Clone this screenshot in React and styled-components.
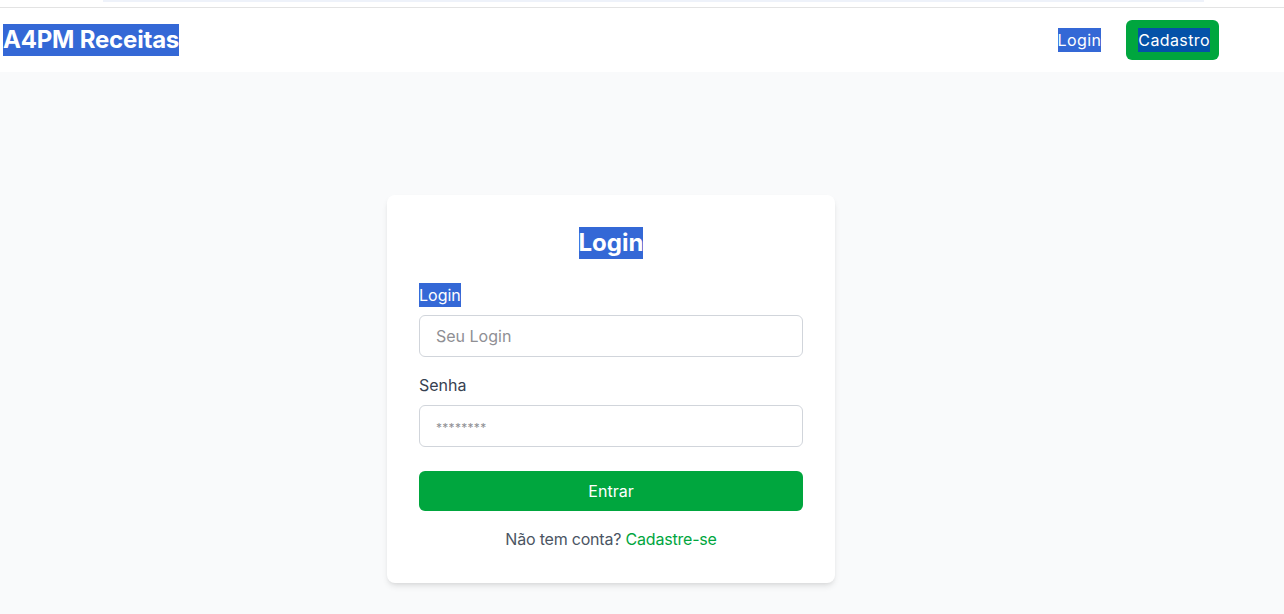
import React from 'react'
import styled, { createGlobalStyle } from 'styled-components'

const GlobalStyle = createGlobalStyle`
  * { box-sizing: border-box; }
  html, body { margin: 0; padding: 0; }
  body {
    font-family: Inter, "Noto Sans", Arial, sans-serif;
    background: #f9fafb;
    color: #1f2937;
  }
`

const Page = styled.div`
  min-height: 614px;
  display: flex;
  flex-direction: column;
  background: #f9fafb;
`

const TopStrip = styled.div`
  height: 8px;
  background: #fff;
  border-bottom: 1px solid #e3e3e3;
  padding-left: 103px;
`

const StripBar = styled.div`
  width: 1101px;
  height: 2px;
  background: #eef2fa;
`

const Header = styled.header`
  height: 64px;
  background: #fff;
  display: flex;
  align-items: center;
  justify-content: space-between;
  padding: 0 65px 0 3px;
`

const Selected = styled.span`
  display: inline-block;
  background: ${(p) => (p.$onGreen ? '#0452a8' : '#3468d6')};
  color: #fff;
  line-height: ${(p) => p.$lh || '24px'};
`

const Brand = styled.h1`
  margin: 0;
  font-size: 24px;
  font-weight: 700;
  letter-spacing: -0.2px;
`

const Nav = styled.nav`
  display: flex;
  align-items: center;
  gap: 25px;
`

const NavLink = styled.a`
  font-size: 16px;
  letter-spacing: 0.4px;
  color: #374151;
  text-decoration: none;
`

const NavButton = styled.a`
  height: 40px;
  display: flex;
  align-items: center;
  padding: 0 9px 0 12px;
  background: #00a63e;
  border-radius: 6px;
  font-size: 16px;
  letter-spacing: 0.4px;
  text-decoration: none;
`

const Main = styled.main`
  flex: 1;
  display: flex;
  justify-content: center;
  padding: 123px 62px 0 0;
`

const Card = styled.div`
  width: 448px;
  height: 388px;
  background: #fff;
  border-radius: 8px;
  box-shadow: 0 4px 6px -1px rgba(0, 0, 0, 0.1), 0 2px 4px -2px rgba(0, 0, 0, 0.08);
  padding: 32px;
  display: flex;
  flex-direction: column;
`

const Title = styled.h2`
  margin: 0 0 24px;
  text-align: center;
  font-size: 24px;
  font-weight: 700;
`

const Field = styled.div`
  display: flex;
  flex-direction: column;
  gap: 8px;
  margin-bottom: ${(p) => p.$mb || '16px'};
`

const Label = styled.label`
  font-size: 16px;
  line-height: 24px;
  color: #374151;
`

const Input = styled.input`
  height: 42px;
  width: 100%;
  border: 1px solid #d1d5db;
  border-radius: 6px;
  padding: 0 16px;
  font-family: inherit;
  font-size: 16px;
  color: #1f2937;
  outline: none;
  &::placeholder {
    color: #8f8f94;
  }
  &[type='password']::placeholder {
    font-size: 12px;
    letter-spacing: 0.3px;
  }
`

const Submit = styled.button`
  height: 40px;
  width: 100%;
  border: none;
  border-radius: 6px;
  background: #00a63e;
  color: #fff;
  font-family: inherit;
  font-size: 16px;
  margin-bottom: 16px;
`

const Footer = styled.p`
  margin: 0;
  text-align: center;
  font-size: 16px;
  line-height: 24px;
  letter-spacing: -0.2px;
  color: #4b5563;
  a {
    color: #00a63e;
    text-decoration: none;
  }
`

export default function App() {
  return (
    <Page>
      <GlobalStyle />
      <TopStrip>
        <StripBar />
      </TopStrip>
      <Header>
        <Brand>
          <Selected $lh="32px">A4PM Receitas</Selected>
        </Brand>
        <Nav>
          <NavLink href="#">
            <Selected>Login</Selected>
          </NavLink>
          <NavButton href="#">
            <Selected $onGreen>Cadastro</Selected>
          </NavButton>
        </Nav>
      </Header>
      <Main>
        <Card>
          <Title>
            <Selected $lh="32px">Login</Selected>
          </Title>
          <Field>
            <Label>
              <Selected>Login</Selected>
            </Label>
            <Input placeholder="Seu Login" />
          </Field>
          <Field $mb="24px">
            <Label>Senha</Label>
            <Input type="password" placeholder="********" />
          </Field>
          <Submit>Entrar</Submit>
          <Footer>
            Não tem conta? <a href="#">Cadastre-se</a>
          </Footer>
        </Card>
      </Main>
    </Page>
  )
}
